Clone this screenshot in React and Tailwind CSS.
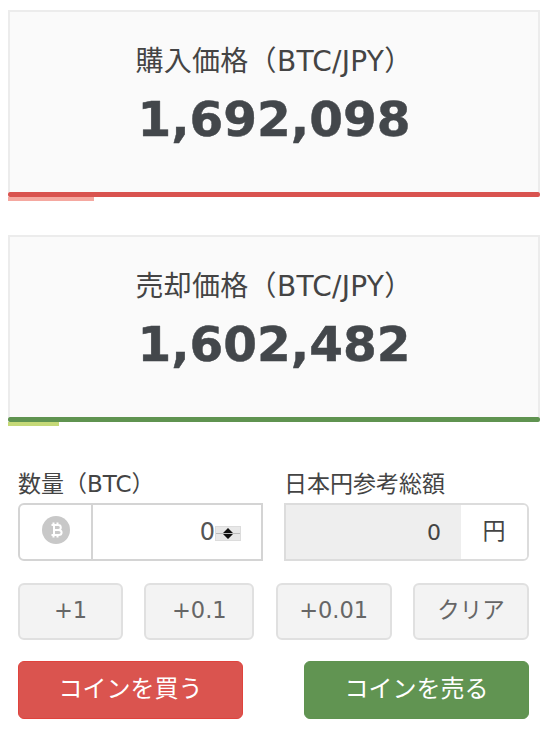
import { useState } from 'react'

const FONT = "font-['DejaVu_Sans','Noto_Sans_CJK_JP',sans-serif]"

const PriceCard = ({ title, price, barClass, progressClass }) => (
    <div>
        <div className="flex h-[182px] flex-col items-center border-2 border-b-0 border-[#ececec] bg-[#fafafa] pt-[30px]">
            <div className="text-[28px] leading-[40px] tracking-[0.3px] text-[#444]">{title}</div>
            <div className="mt-[9px] text-[48.500px] leading-[56px] font-bold text-[#43474b] [-webkit-text-stroke:0.5px_#43474b]">{price}</div>
        </div>
        <div className={`h-[5px] rounded-[2px] ${barClass}`} />
        <div className={`h-1 ${progressClass}`} />
    </div>
)

const QuickButton = ({ className, children }) => (
    <button className={`flex h-[57px] items-center justify-center rounded-md border-2 border-[#e0e0e0] bg-[#f3f3f3] pb-0.5 text-[22.500px] text-[#666] ${className}`}>
        {children}
    </button>
)

const BitcoinIcon = () => (
    <svg className="mb-1" width="28" height="28" viewBox="0 0 28 28">
        <circle cx="14" cy="14" r="14" fill="#c8c8c8" />
        <path
            d="M11.500 6.500v2.500M15.500 6.500v2.500M11.500 19v2.500M15.500 19v2.500M12 9v10M9.500 9h6.500c1.800 0 2.800 1 2.800 2.400s-1 2.600-2.800 2.600h-4h4.500c2 0 3.100 1 3.100 2.500s-1.100 2.500-3.100 2.500H9.500"
            fill="none"
            stroke="#fff"
            strokeWidth="2"
        />
    </svg>
)

export default function App() {
    const [amount] = useState('0')

    return (
        <div className={`h-[740px] w-[550px] bg-white pt-[10px] ${FONT}`}>
            <div className="pr-[10px] pl-2">
                <PriceCard
                    title="購入価格（BTC/JPY）"
                    price="1,692,098"
                    barClass="bg-[#d9534f]"
                    progressClass="w-[86px] bg-[#f5a8a0]"
                />
                <div className="h-[34px]" />
                <PriceCard
                    title="売却価格（BTC/JPY）"
                    price="1,602,482"
                    barClass="bg-[#5f9350]"
                    progressClass="w-[51px] bg-[#c5d977]"
                />
            </div>

            <div className="mt-[44px] px-[18px] pr-[21px]">
                <div className="flex gap-[21px]">
                    <div className="w-[245px]">
                        <div className="pb-[5px] text-[23px] leading-[28px] text-[#444]">数量（BTC）</div>
                        <div className="flex h-[58px] rounded-l-md border-2 border-[#d4d4d4]">
                            <div className="flex w-[73px] items-center justify-center border-r-2 border-[#d4d4d4]">
                                <BitcoinIcon />
                            </div>
                            <div className="flex flex-1 items-center justify-end pr-5 text-[24px] text-[#555]">
                                <span>{amount}</span>
                                <span className="mt-0.5 flex h-[15px] w-[26px] flex-col border border-[#dcdcdc] bg-[#e8e8e8]">
                                    <svg width="24" height="13" viewBox="0 0 24 13">
                                        <path d="M0 6.500h24" stroke="#bbb" />
                                        <path d="M12 1l5 5H7zM12 12l5-5H7z" fill="#111" />
                                    </svg>
                                </span>
                            </div>
                        </div>
                    </div>
                    <div className="w-[245px]">
                        <div className="pb-[5px] text-[23px] leading-[28px] text-[#444]">日本円参考総額</div>
                        <div className="flex h-[58px] overflow-hidden rounded-r-md border-2 border-[#dcdcdc]">
                            <div className="flex flex-1 items-center justify-end bg-[#eeeeee] pr-[20px] text-[22px] text-[#444]">0</div>
                            <div className="flex w-[66px] items-center justify-center bg-white pb-0.5 text-[23px] text-[#444]">円</div>
                        </div>
                    </div>
                </div>

                <div className="mt-[22px] flex justify-between">
                    <QuickButton className="w-[105px]">+1</QuickButton>
                    <QuickButton className="w-[110px]">+0.1</QuickButton>
                    <QuickButton className="w-[116px]">+0.01</QuickButton>
                    <QuickButton className="w-[116px]">クリア</QuickButton>
                </div>

                <div className="mt-[21px] flex justify-between">
                    <button className="h-[58px] w-[225px] rounded-md border border-[#e0433d] bg-[#da544f] pb-0.5 text-[24px] text-white">コインを買う</button>
                    <button className="h-[58px] w-[225px] rounded-md border border-[#5f9350] bg-[#619452] pb-0.5 text-[24px] text-white">コインを売る</button>
                </div>
            </div>
        </div>
    )
}
